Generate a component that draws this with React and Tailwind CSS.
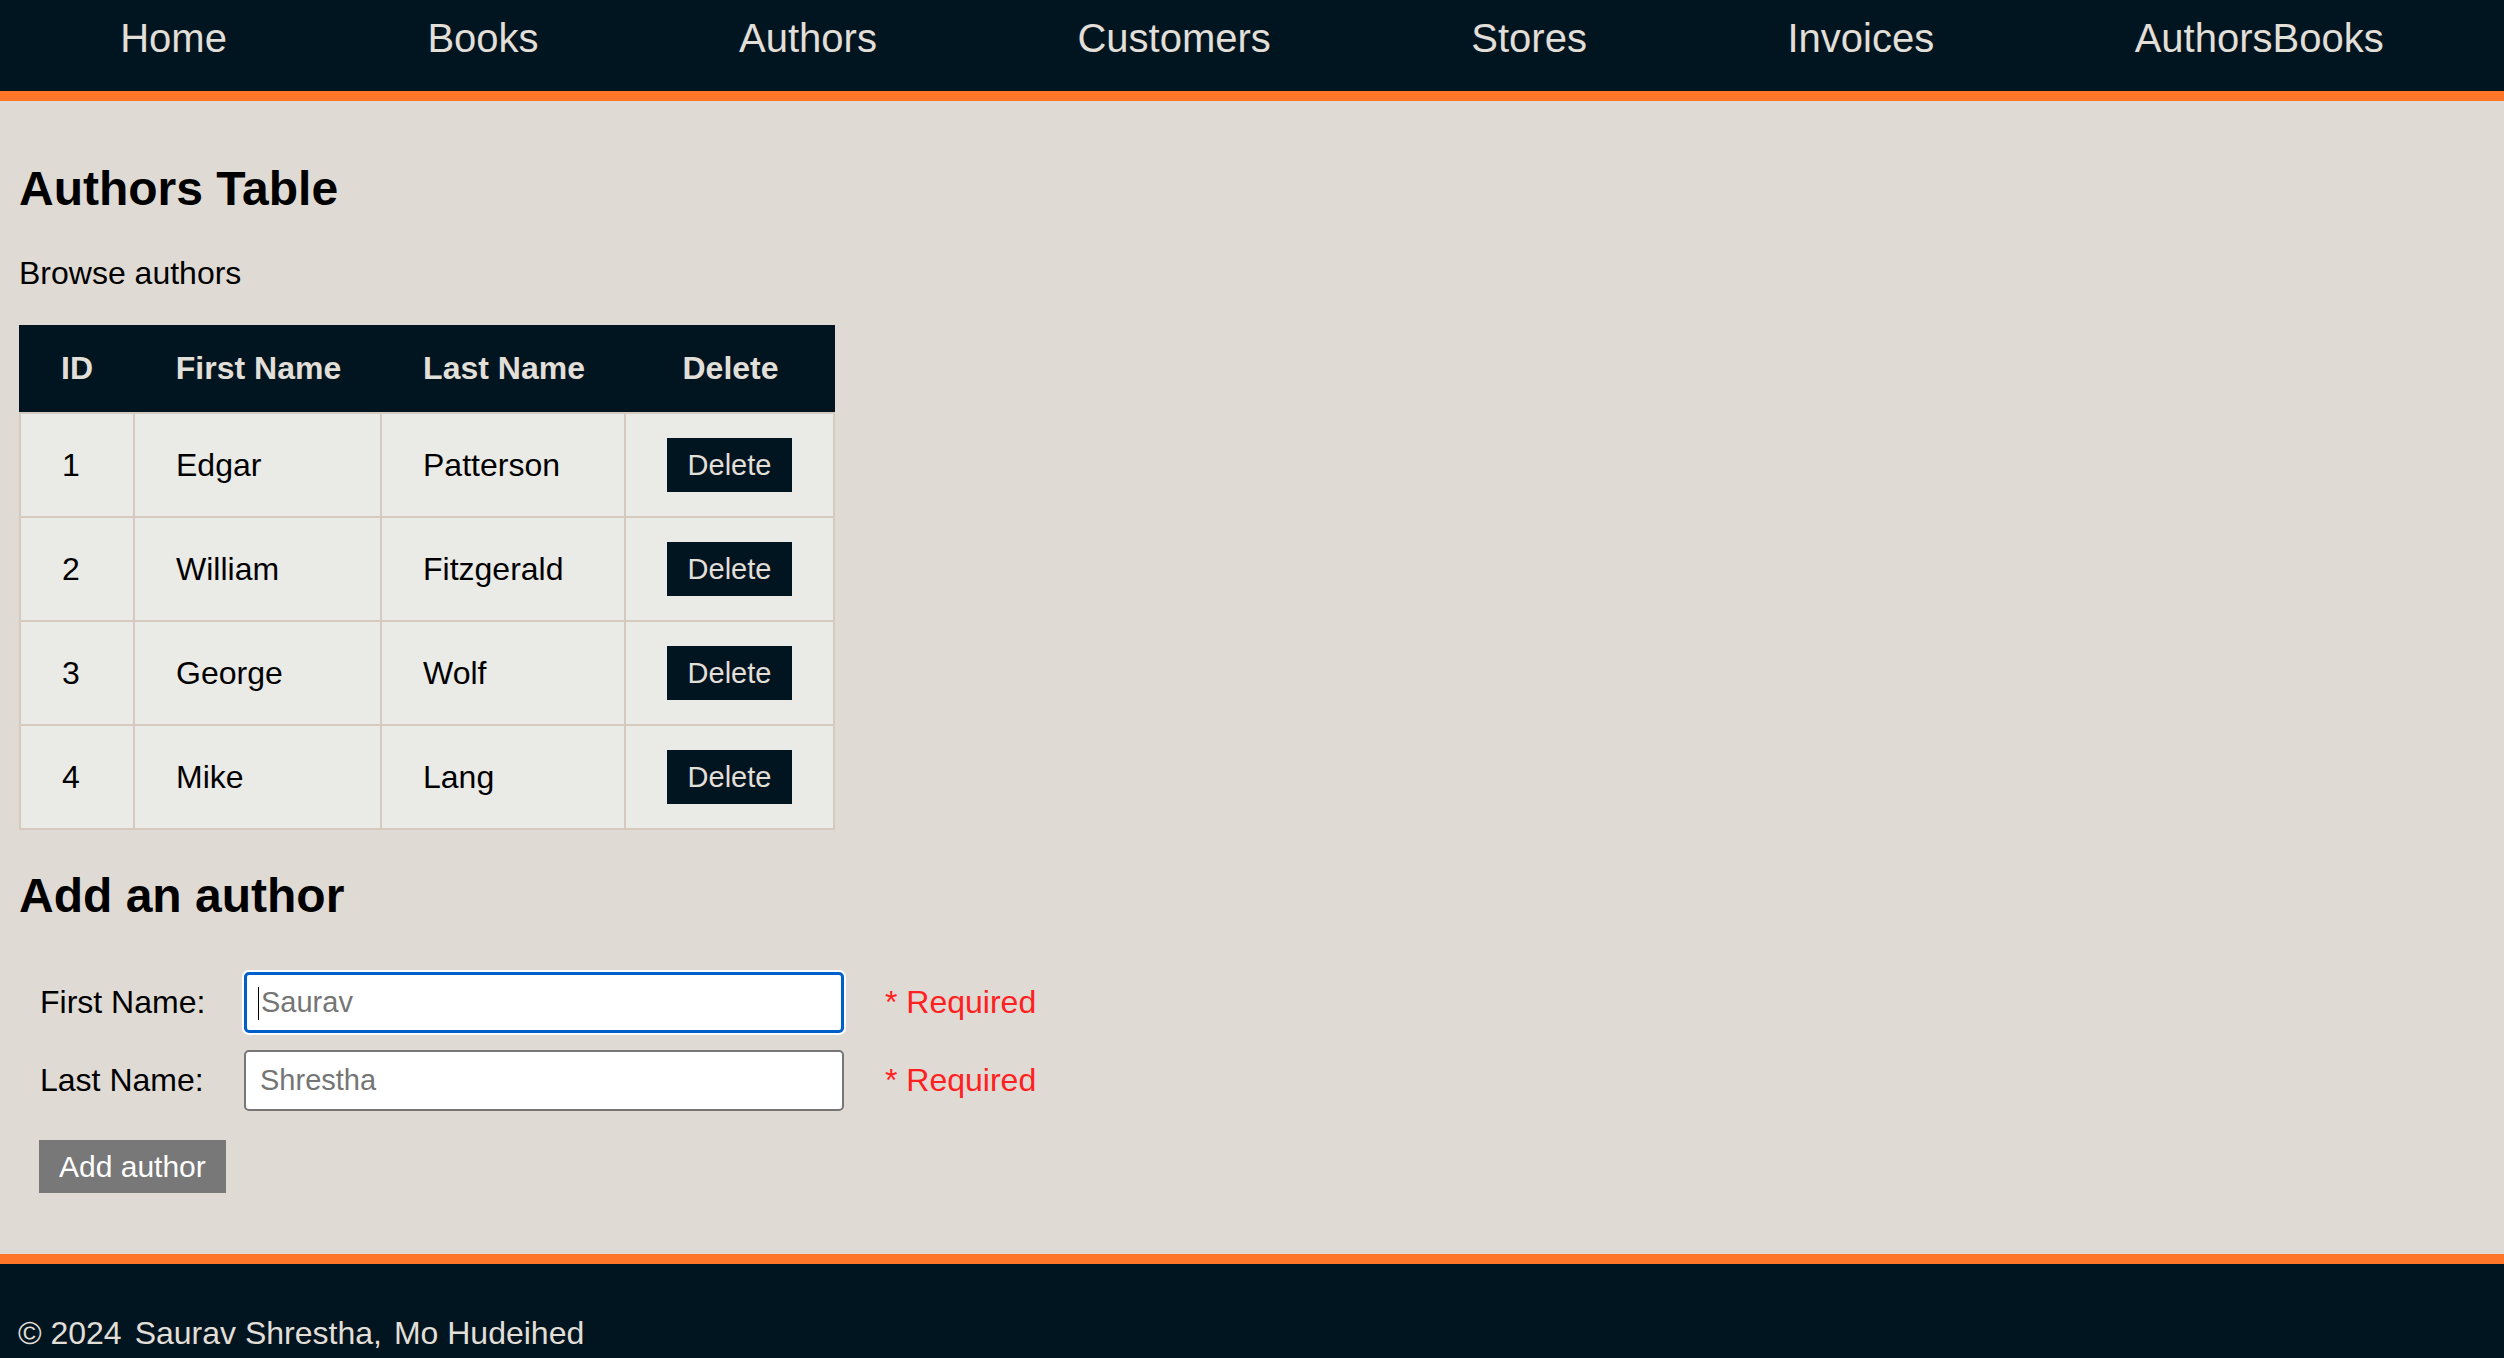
import React from "react";

const links = ["Home", "Books", "Authors", "Customers", "Stores", "Invoices", "AuthorsBooks"];

const authors = [
  { id: 1, first: "Edgar", last: "Patterson" },
  { id: 2, first: "William", last: "Fitzgerald" },
  { id: 3, first: "George", last: "Wolf" },
  { id: 4, first: "Mike", last: "Lang" },
];

const cols = "grid grid-cols-[116px_247px_244px_209px]";

function Nav() {
  return (
    <nav className="h-[101px] bg-[#011520] border-b-[10px] border-[#ff7628]">
      <ul className="flex justify-around px-[20px] pt-[15px]">
        {links.map((l) => (
          <li key={l}>
            <a href="#" className="text-[40px] leading-[46px] text-[#e2ded8]">
              {l}
            </a>
          </li>
        ))}
      </ul>
    </nav>
  );
}

function AuthorsTable() {
  return (
    <div className="mt-[33px] w-[816px] text-[32px] leading-[37px]">
      <div className={`${cols} h-[87px] items-center bg-[#011520] text-center font-bold text-[#e2ded8]`}>
        <div>ID</div>
        <div>First Name</div>
        <div>Last Name</div>
        <div>Delete</div>
      </div>
      <div className="border-t-2 border-[#d5c9c0]">
        {authors.map((a) => (
          <div key={a.id} className={`${cols} h-[104px] bg-[#eaeae6]`}>
            <div className="flex items-center pl-[41px] border-l-2 border-r-2 border-b-2 border-[#d5c9c0]">{a.id}</div>
            <div className="flex items-center pl-[41px] border-r-2 border-b-2 border-[#d5c9c0]">{a.first}</div>
            <div className="flex items-center pl-[41px] border-r-2 border-b-2 border-[#d5c9c0]">{a.last}</div>
            <div className="flex items-center justify-center border-r-2 border-b-2 border-[#d5c9c0]">
              <button className="h-[54px] px-[21px] bg-[#011520] text-[29px] text-[#e2ded8]">Delete</button>
            </div>
          </div>
        ))}
      </div>
    </div>
  );
}

function Field({ label, placeholder, focused }) {
  return (
    <div className="flex items-center h-[61px]">
      <label className="w-[225px] pl-[21px] text-[32px] leading-[37px]">{label}</label>
      <div className="relative">
        <input
          type="text"
          placeholder={placeholder}
          className={
            focused
              ? "w-[600px] h-[61px] pl-[14px] bg-white rounded-[5px] border-[3px] border-[#0060c9] ring-2 ring-white text-[29px] placeholder:text-[#757575] outline-none"
              : "w-[600px] h-[61px] pl-[14px] bg-white rounded-[5px] border-2 border-[#767676] text-[29px] placeholder:text-[#757575] outline-none"
          }
        />
        {focused && <span className="absolute left-[14px] top-[15px] w-px h-[33px] bg-black" />}
      </div>
      <span className="ml-[41px] text-[32px] leading-[37px] text-[#ff2020]">* Required</span>
    </div>
  );
}

export default function App() {
  return (
    <div className="min-h-screen bg-[#dfdad4] font-['Liberation_Sans',Arial,sans-serif] text-black">
      <Nav />
      <main className="px-[19px] pt-[60px] pb-[61px]">
        <h2 className="text-[48px] font-bold leading-[56px]">Authors Table</h2>
        <p className="mt-[38px] text-[32px] leading-[37px]">Browse authors</p>
        <AuthorsTable />
        <h2 className="mt-[38px] text-[48px] font-bold leading-[56px]">Add an author</h2>
        <form className="mt-[48px]" onSubmit={(e) => e.preventDefault()}>
          <Field label="First Name:" placeholder="Saurav" focused />
          <div className="mt-[17px]">
            <Field label="Last Name:" placeholder="Shrestha" />
          </div>
          <button
            type="submit"
            className="mt-[29px] ml-[20px] h-[53px] px-[20px] bg-[#787878] text-[30px] text-white"
          >
            Add author
          </button>
        </form>
      </main>
      <footer className="bg-[#011520] border-t-[10px] border-[#ff7628] pt-[51px] pb-[51px] pl-[18px] text-[32px] leading-[37px] text-[#e2ded8]">
        <span>© 2024</span>
        <span className="ml-[13px]">Saurav Shrestha,</span>
        <span className="ml-[12px]">Mo Hudeihed</span>
      </footer>
    </div>
  );
}
